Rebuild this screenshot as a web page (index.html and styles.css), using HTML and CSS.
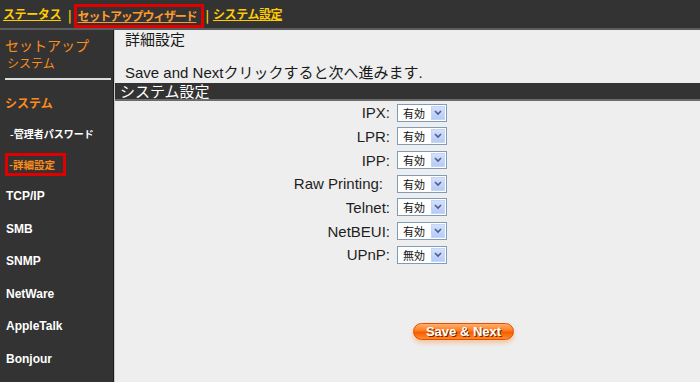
FILE: index.html
```html
<!DOCTYPE html>
<html lang="ja">
<head>
  <meta charset="UTF-8" />
  <meta name="viewport" content="width=device-width, initial-scale=1.0"/>
  <title>セットアップウィザード</title>
  <link rel="stylesheet" href="styles.css">
</head>
<body>

  <div class="topnav">
    <a class="top-link" href="#">ステータス</a>
    <span class="top-sep">|</span>
    <span class="top-current"><a class="top-link wizard" href="#">セットアップウィザード</a></span>
    <span class="top-sep after">|</span>
    <a class="top-link" href="#">システム設定</a>
  </div>

  <div class="layout">
    <div class="sidebar">
      <div class="side-title">セットアップ</div>
      <div class="side-sub">システム</div>
      <div class="side-rule"></div>
      <div class="side-group">システム</div>
      <div class="side-link">-管理者パスワード</div>
      <div class="side-current">-詳細設定</div>
      <ul class="side-nav">
        <li>TCP/IP</li>
        <li>SMB</li>
        <li>SNMP</li>
        <li>NetWare</li>
        <li>AppleTalk</li>
        <li>Bonjour</li>
      </ul>
    </div>

    <div class="main">
      <div class="page-title">詳細設定</div>
      <div class="notice">Save and Nextクリックすると次へ進みます.</div>
      <div class="section-bar">システム設定</div>

      <div class="form">
        <div class="form-row">
          <span class="form-label">IPX:</span>
          <div class="select"><span class="select-value">有効</span><span class="select-arrow"><svg width="8" height="6" viewBox="0 0 8 6"><polyline points="1,1 4,4 7,1" fill="none" stroke="#4a5f8c" stroke-width="1.6"/></svg></span></div>
        </div>
        <div class="form-row">
          <span class="form-label">LPR:</span>
          <div class="select"><span class="select-value">有効</span><span class="select-arrow"><svg width="8" height="6" viewBox="0 0 8 6"><polyline points="1,1 4,4 7,1" fill="none" stroke="#4a5f8c" stroke-width="1.6"/></svg></span></div>
        </div>
        <div class="form-row">
          <span class="form-label">IPP:</span>
          <div class="select"><span class="select-value">有効</span><span class="select-arrow"><svg width="8" height="6" viewBox="0 0 8 6"><polyline points="1,1 4,4 7,1" fill="none" stroke="#4a5f8c" stroke-width="1.6"/></svg></span></div>
        </div>
        <div class="form-row">
          <span class="form-label raw">Raw Printing:</span>
          <div class="select"><span class="select-value">有効</span><span class="select-arrow"><svg width="8" height="6" viewBox="0 0 8 6"><polyline points="1,1 4,4 7,1" fill="none" stroke="#4a5f8c" stroke-width="1.6"/></svg></span></div>
        </div>
        <div class="form-row">
          <span class="form-label">Telnet:</span>
          <div class="select"><span class="select-value">有効</span><span class="select-arrow"><svg width="8" height="6" viewBox="0 0 8 6"><polyline points="1,1 4,4 7,1" fill="none" stroke="#4a5f8c" stroke-width="1.6"/></svg></span></div>
        </div>
        <div class="form-row">
          <span class="form-label">NetBEUI:</span>
          <div class="select"><span class="select-value">有効</span><span class="select-arrow"><svg width="8" height="6" viewBox="0 0 8 6"><polyline points="1,1 4,4 7,1" fill="none" stroke="#4a5f8c" stroke-width="1.6"/></svg></span></div>
        </div>
        <div class="form-row">
          <span class="form-label">UPnP:</span>
          <div class="select"><span class="select-value">無効</span><span class="select-arrow"><svg width="8" height="6" viewBox="0 0 8 6"><polyline points="1,1 4,4 7,1" fill="none" stroke="#4a5f8c" stroke-width="1.6"/></svg></span></div>
        </div>
      </div>

      <div class="actions">
        <button class="save-btn">Save &amp; Next</button>
      </div>
    </div>
  </div>

</body>
</html>
```

FILE: styles.css
```css
body {
  margin: 0;
  background-color: #333;
  font-family: "Liberation Sans", "Noto Sans CJK JP", sans-serif;
  color: #1a1a1a;
  overflow: hidden;
}

/* top links */
.topnav {
  height: 28px;
  border-bottom: 2px solid #5c5c5c;
  display: flex;
  align-items: center;
  padding-left: 3px;
  font-family: "Noto Sans CJK JP", sans-serif;
  font-size: 12px;
  font-weight: bold;
}

.top-link {
  color: #ffcc00;
  text-decoration: underline;
  line-height: 16px;
  letter-spacing: -0.4px;
}

.top-link.wizard {
  color: #ff9a2e;
  letter-spacing: -1.2px;
}

.top-sep {
  color: #ffcc00;
  margin: 0 2px 0 7px;
}

.top-sep.after {
  margin: 0 4px 0 1px;
}

.top-current {
  border: 3px solid #e00000;
  height: 18px;
  display: flex;
  align-items: center;
  padding: 0 5px 0 1px;
  margin-top: 4px;
}

.layout {
  display: flex;
  height: 352px;
}

/* left menu */
.sidebar {
  width: 114px;
  border-right: 1px solid #1c1c1c;
  padding: 6px 0 0 5px;
  box-sizing: border-box;
  display: flex;
  flex-direction: column;
  font-family: "Noto Sans CJK JP", sans-serif;
}

.side-title {
  color: #ff8c1a;
  font-size: 14px;
  line-height: 18px;
}

.side-sub {
  color: #ff8c1a;
  font-size: 12px;
  line-height: 14px;
  margin-top: 2px;
  padding-left: 2px;
}

.side-rule {
  width: 106px;
  height: 2px;
  background-color: #dcdcdc;
  margin-top: 8px;
}

.side-group {
  color: #ff8c1a;
  font-size: 12px;
  font-weight: bold;
  line-height: 14px;
  margin-top: 16px;
}

.side-link {
  color: #fff;
  font-size: 10px;
  font-weight: bold;
  line-height: 12px;
  margin-top: 18px;
  padding-left: 5px;
}

.side-current {
  width: 54px;
  height: 17px;
  border: 3px solid #e00000;
  color: #ff8c1a;
  font-size: 10.5px;
  font-weight: bold;
  line-height: 17px;
  padding-left: 1px;
  margin-top: 13px;
  box-sizing: content-box;
}

.side-nav {
  list-style: none;
  margin: 4px 0 0 0;
  padding: 0 0 0 1px;
  font-family: "Liberation Sans", sans-serif;
  font-size: 12px;
  font-weight: bold;
  color: #fff;
}

.side-nav li {
  height: 32.6px;
  line-height: 32.6px;
}

/* content */
.main {
  flex: 1;
  background-color: #eeeeee;
  border-left: 1px solid #c8c8c8;
}

.page-title {
  font-family: "Noto Sans CJK JP", sans-serif;
  font-size: 15px;
  line-height: 17px;
  padding-left: 10px;
}

.notice {
  font-size: 15px;
  line-height: 18px;
  padding-left: 10px;
  margin-top: 17px;
}

.section-bar {
  background-color: #333;
  color: #fff;
  font-family: "Noto Sans CJK JP", sans-serif;
  font-size: 15px;
  line-height: 16px;
  height: 16px;
  margin-top: 1px;
  padding-left: 5px;
  border-bottom: 2px solid #6b6b6b;
}

.form {
  display: flex;
  flex-direction: column;
}

.form-row {
  height: 23.67px;
  display: flex;
  align-items: center;
}

.form-label {
  width: 275px;
  text-align: right;
  font-size: 15px;
  color: #1e1e1e;
}

.form-label.raw {
  width: 268px;
  margin-right: 7px;
}

.select {
  margin-left: 7px;
  width: 42px;
  height: 16px;
  border: 1px solid #7f9db9;
  background-color: #fff;
  display: flex;
  align-items: center;
  justify-content: space-between;
  padding: 0 1px 0 5px;
}

.select-value {
  font-family: "Noto Sans CJK JP", sans-serif;
  font-size: 11px;
  color: #111;
}

.select-arrow {
  width: 14px;
  height: 14px;
  background: linear-gradient(#d3e0fd, #b7cbf6);
  border: 1px solid #c5d5f8;
  box-sizing: border-box;
  display: flex;
  align-items: center;
  justify-content: center;
}

.actions {
  padding: 55px 0 0 298px;
}

.save-btn {
  width: 101px;
  height: 17px;
  border: 1px solid #e24f00;
  border-radius: 9px;
  background: linear-gradient(#ffb070, #ff7a1c 45%, #f65c00 55%, #ff8a2a);
  box-shadow: 0 3px 4px rgba(255, 120, 20, 0.35);
  color: #fff;
  font-family: "Liberation Sans", sans-serif;
  font-size: 13px;
  font-weight: bold;
  line-height: 14px;
  padding: 0;
  text-shadow: 1px 1px 0 #6b2a00;
}
```
